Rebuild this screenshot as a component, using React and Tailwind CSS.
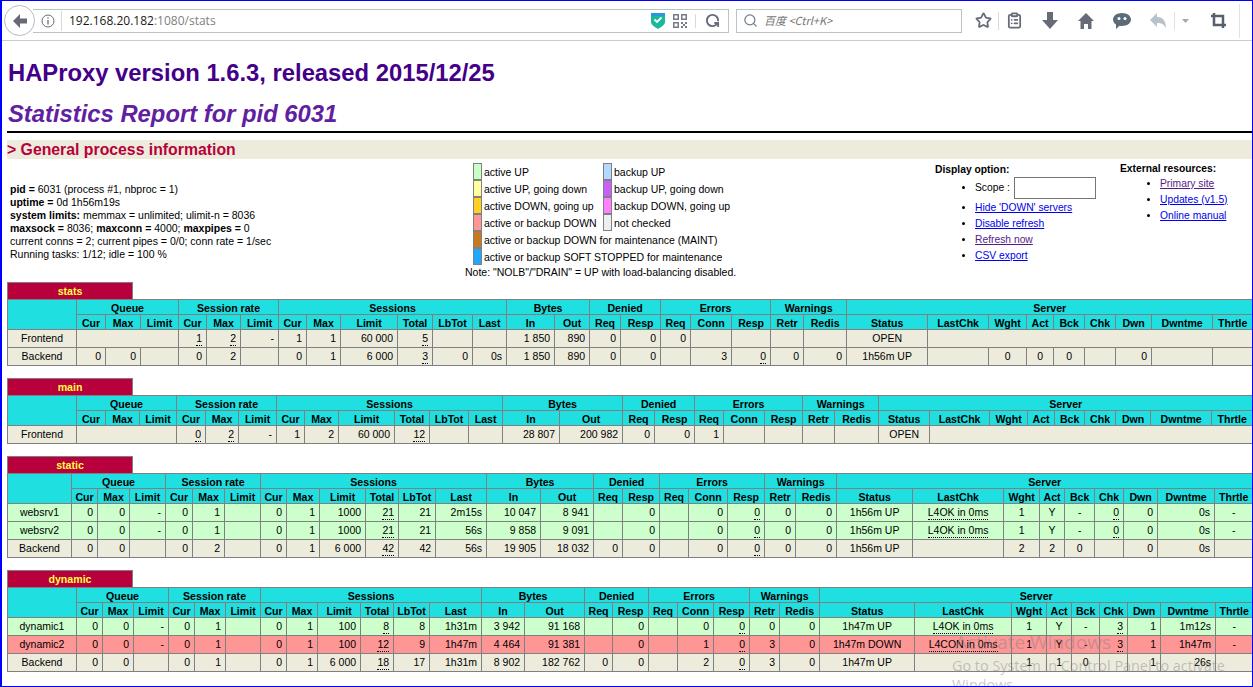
import { ClipboardList, Search, Star, RotateCw } from "lucide-react";

// column edges in page px, one list per proxy table
const EDGES = {
  stats: [7, 76, 105, 140, 178, 206, 240, 278, 306, 340, 397, 432, 472, 506, 554, 589, 620, 660, 690, 731, 770, 803, 846, 927, 988, 1026, 1053, 1084, 1115, 1151, 1212, 1252],
  main: [7, 76, 105, 139, 176, 205, 238, 276, 304, 338, 394, 429, 468, 502, 559, 622, 654, 694, 723, 764, 802, 834, 878, 929, 989, 1027, 1054, 1084, 1115, 1150, 1211, 1252],
  static: [7, 71, 97, 129, 165, 192, 224, 260, 286, 319, 365, 398, 435, 486, 540, 593, 622, 659, 688, 727, 764, 795, 836, 912, 1003, 1039, 1064, 1094, 1123, 1157, 1214, 1252],
  dynamic: [7, 76, 102, 133, 168, 194, 225, 260, 286, 317, 360, 393, 429, 481, 524, 584, 612, 648, 677, 713, 749, 779, 819, 914, 1011, 1046, 1071, 1099, 1127, 1160, 1215, 1252],
};

const GROUPS = [
  ["Queue", 3],
  ["Session rate", 3],
  ["Sessions", 6],
  ["Bytes", 2],
  ["Denied", 2],
  ["Errors", 3],
  ["Warnings", 2],
  ["Server", 9],
];

const COLS = ["Cur", "Max", "Limit", "Cur", "Max", "Limit", "Cur", "Max", "Limit", "Total", "LbTot", "Last", "In", "Out", "Req", "Resp", "Req", "Conn", "Resp", "Retr", "Redis", "Status", "LastChk", "Wght", "Act", "Bck", "Chk", "Dwn", "Dwntme", "Thrtle"];

// column index (with name = 0) of the centred cells
const CENTERED = [0, 22, 23, 24, 25, 26, 30];

const u = (text) => ({ text, underlined: true });
const span = (n) => ({ colSpan: n });

const PROXIES = [
  {
    name: "stats",
    rows: [
      { bg: "bg-[#edecdc]", cells: ["Frontend", span(3), u("1"), u("2"), "-", "1", "1", "60 000", u("5"), "", "", "1 850", "890", "0", "0", "0", "", "", "", "", "OPEN", span(8)] },
      { bg: "bg-[#edecdc]", cells: ["Backend", "0", "0", "", "0", "2", "", "0", "1", "6 000", u("3"), "0", "0s", "1 850", "890", "0", "0", "", "3", u("0"), "0", "0", "1h56m UP", "", "0", "0", "0", "", "0", "", ""] },
    ],
  },
  {
    name: "main",
    rows: [
      { bg: "bg-[#edecdc]", cells: ["Frontend", span(3), u("0"), u("2"), "-", "1", "2", "60 000", u("12"), "", "", "28 807", "200 982", "0", "0", "1", "", "", "", "", "OPEN", span(8)] },
    ],
  },
  {
    name: "static",
    rows: [
      { bg: "bg-[#ccffcc]", cells: ["websrv1", "0", "0", "-", "0", "1", "", "0", "1", "1000", u("21"), "21", "2m15s", "10 047", "8 941", "", "0", "", "0", u("0"), "0", "0", "1h56m UP", u("L4OK in 0ms"), "1", "Y", "-", u("0"), "0", "0s", "-"] },
      { bg: "bg-[#ccffcc]", cells: ["websrv2", "0", "0", "-", "0", "1", "", "0", "1", "1000", u("21"), "21", "56s", "9 858", "9 091", "", "0", "", "0", u("0"), "0", "0", "1h56m UP", u("L4OK in 0ms"), "1", "Y", "-", u("0"), "0", "0s", "-"] },
      { bg: "bg-[#edecdc]", cells: ["Backend", "0", "0", "", "0", "2", "", "0", "1", "6 000", u("42"), "42", "56s", "19 905", "18 032", "0", "0", "", "0", u("0"), "0", "0", "1h56m UP", "", "2", "2", "0", "", "0", "0s", ""] },
    ],
  },
  {
    name: "dynamic",
    rows: [
      { bg: "bg-[#ccffcc]", cells: ["dynamic1", "0", "0", "-", "0", "1", "", "0", "1", "100", u("8"), "8", "1h31m", "3 942", "91 168", "", "0", "", "0", u("0"), "0", "0", "1h47m UP", u("L4OK in 0ms"), "1", "Y", "-", u("3"), "1", "1m12s", "-"] },
      { bg: "bg-[#ff9696]", cells: ["dynamic2", "0", "0", "-", "0", "1", "", "0", "1", "100", u("12"), "9", "1h47m", "4 464", "91 381", "", "0", "", "1", u("0"), "3", "0", "1h47m DOWN", u("L4CON in 0ms"), "1", "Y", "-", u("3"), "1", "1h47m", "-"] },
      { bg: "bg-[#edecdc]", cells: ["Backend", "0", "0", "", "0", "1", "", "0", "1", "6 000", u("18"), "17", "1h31m", "8 902", "182 762", "0", "0", "", "2", u("0"), "3", "0", "1h47m UP", "", "1", "1", "0", "", "1", "26s", ""] },
    ],
  },
];

const LEGEND_LEFT = [
  ["bg-[#c8ffc8]", "active UP"],
  ["bg-[#ffffa0]", "active UP, going down"],
  ["bg-[#ffd020]", "active DOWN, going up"],
  ["bg-[#ff9696]", "active or backup DOWN"],
  ["bg-[#c87820]", "active or backup DOWN for maintenance (MAINT)"],
  ["bg-[#20a8ff]", "active or backup SOFT STOPPED for maintenance"],
];

const LEGEND_RIGHT = [
  ["bg-[#b4d8ff]", "backup UP"],
  ["bg-[#c860f8]", "backup UP, going down"],
  ["bg-[#ff80ff]", "backup DOWN, going up"],
  ["bg-[#eeeeee]", "not checked"],
];

const ProxyTable = ({ proxy }) => {
  const edges = EDGES[proxy.name];
  return (
    <section>
      <div className="flex h-[17px] w-[126px] items-center justify-center border border-b-0 border-[#808080] bg-[#b8003c] pt-[2px] text-[10.6px] font-bold text-[#ffff40]">
        {proxy.name}
      </div>
      <table className="w-[1245px] table-fixed border-collapse text-[10.5px]">
        <colgroup>
          {edges.slice(1).map((edge, i) => (
            <col key={i} style={{ width: edge - edges[i] }} />
          ))}
        </colgroup>
        <thead>
          <tr className="h-[15px]">
            <th rowSpan={2} className="border border-[#808080] bg-[#20dfe0]" />
            {GROUPS.map(([label, n]) => (
              <th key={label} colSpan={n} className="h-[15px] border border-[#808080] bg-[#20dfe0] p-0 pt-[2px] text-[10.6px] font-bold leading-none">
                {label}
              </th>
            ))}
          </tr>
          <tr className="h-[15px]">
            {COLS.map((label, i) => (
              <th key={i} className="h-[15px] overflow-hidden border border-[#808080] bg-[#20dfe0] p-0 pt-[2px] text-[10.6px] font-bold leading-none">
                {label}
              </th>
            ))}
          </tr>
        </thead>
        <tbody>
          {proxy.rows.map((row, r) => {
            let col = 0;
            return (
              <tr key={r} className="h-[18px]">
                {row.cells.map((cell, i) => {
                  const colSpan = cell.colSpan || 1;
                  const index = col;
                  col += colSpan;
                  const text = typeof cell === "string" ? cell : cell.text;
                  return (
                    <td
                      key={i}
                      colSpan={colSpan}
                      className={`h-[18px] whitespace-nowrap border border-[#808080] py-0 pl-0 leading-none ${row.bg} ${CENTERED.includes(index) ? "pr-0 text-center" : "pr-1 text-right"}`}
                    >
                      {cell.underlined ? (
                        <span className="inline-block border-b border-dotted border-black leading-[13px]">{text}</span>
                      ) : (
                        text
                      )}
                    </td>
                  );
                })}
              </tr>
            );
          })}
        </tbody>
      </table>
    </section>
  );
};

const LegendRow = ({ color, label }) => (
  <div className="flex h-[17px] items-center">
    <span className={`h-[17px] w-[9px] border border-[#808080] ${color}`} />
    <span className="ml-[2px] mt-[2px] whitespace-nowrap">{label}</span>
  </div>
);

const Toolbar = () => (
  <div className="flex h-[40px] items-center border-b border-[#c8ccce] bg-white">
    <button className="z-10 ml-[2px] flex h-[31px] w-[31px] shrink-0 items-center justify-center rounded-full border border-[#b4bcc4] bg-white">
      <svg width="18" height="18" viewBox="0 0 18 18">
        <path d="M9 2 2 9l7 7v-4.500h7v-5H9z" fill="#676b78" />
      </svg>
    </button>
    <div className="-ml-[2px] flex h-[24px] w-[696px] items-center border border-l-0 border-[#bac4c8]">
      <svg className="ml-[8px]" width="14" height="14" viewBox="0 0 14 14" fill="none" stroke="#676b78">
        <circle cx="7" cy="7" r="6" />
        <path d="M7 6v4.500M7 3.500v1.200" strokeWidth="1.300" />
      </svg>
      <span className="ml-[6px] h-[20px] w-px bg-[#d6dadd]" />
      <span className="ml-[7px] font-['Open_Sans',sans-serif] text-[12px] text-[#1a1a1a]">
        192.168.20.182<span className="text-[#808080]">:1080/stats</span>
      </span>
      <svg className="ml-auto mr-[8px]" width="14" height="17" viewBox="0 0 14 17">
        <path d="M0 1h14v9c0 3-4 5-7 7-3-2-7-4-7-7z" fill="#1bb89b" />
        <path d="M0 1h14v3H0z" fill="#2a9ad6" />
        <path d="m3.500 7.500 2.500 2.500 4.500-4.500" fill="none" stroke="#fff" strokeWidth="1.800" />
      </svg>
      <svg className="mr-[8px]" width="14" height="14" viewBox="0 0 14 14" fill="#777b85">
        <path d="M0 0h6v6H0zm1.500 1.500v3h3v-3zM8 0h6v6H8zm1.500 1.500v3h3v-3zM0 8h6v6H0zm1.500 1.500v3h3v-3zM8 8h2v2H8zm4 0h2v2h-2zm-2 2h2v2h-2zm-2 2h2v2H8zm4 0h2v2h-2z" />
      </svg>
      <span className="mr-[9px] h-[14px] w-px bg-[#d6dadd]" />
      <RotateCw size={15} strokeWidth={3} className="mr-[8px] -scale-x-100 rotate-180 text-[#676b78]" />
    </div>
    <div className="ml-[7px] flex h-[24px] w-[226px] items-center border border-[#bac4c8]">
      <Search size={15} className="ml-[6px] text-[#777b85]" />
      <span className="ml-[6px] font-['Noto_Sans_CJK_SC','Open_Sans',sans-serif] text-[11px] italic text-[#777]">百度 &lt;Ctrl+K&gt;</span>
    </div>
    <Star size={17} strokeWidth={2.500} className="ml-[13px] text-[#676b78]" />
    <span className="ml-[6px] h-[18px] w-px bg-[#d6dadd]" />
    <ClipboardList size={17} strokeWidth={2.500} className="ml-[7px] text-[#676b78]" />
    <svg className="ml-[19px]" width="16" height="17" viewBox="0 0 16 17" fill="#676b78">
      <path d="M5 0h6v8h5l-8 9-8-9h5z" />
    </svg>
    <svg className="ml-[20px]" width="16" height="16" viewBox="0 0 16 16" fill="#676b78">
      <path d="M8 0 0 8h2.500v8h3.500v-5h4v5h3.500V8H16z" />
    </svg>
    <svg className="ml-[19px]" width="18" height="16" viewBox="0 0 18 16">
      <path d="M9 0c5 0 9 2.800 9 6.500S14 13 9 13c-1 0-1.500 0-2.500-.2L3 16v-4.500C1 10.300 0 8.500 0 6.500 0 2.800 4 0 9 0z" fill="#5b6b78" />
      <circle cx="6" cy="5.500" r="1.500" fill="#fff" />
      <circle cx="12" cy="5.500" r="1.500" fill="#fff" />
    </svg>
    <svg className="ml-[19px]" width="16" height="15" viewBox="0 0 16 15" fill="#b8c2c9">
      <path d="M7 0v4c5 0 9 3 9 11-2-4-5-5-9-5v4L0 7z" />
    </svg>
    <span className="ml-[8px] h-[18px] w-px bg-[#e0e3e6]" />
    <svg className="ml-[7px]" width="7" height="4" viewBox="0 0 7 4" fill="#a4a8b0">
      <path d="M0 0h7L3.500 4z" />
    </svg>
    <svg className="ml-[22px]" width="15" height="15" viewBox="0 0 15 15" fill="none" stroke="#55606c" strokeWidth="2.500">
      <path d="M3 0v12h12M0 3h12v12" />
    </svg>
    <span className="ml-[13px] h-[34px] w-px bg-[#e0e3e6]" />
  </div>
);

const App = () => {
  return (
    <div className="relative h-[687px] w-[1253px] overflow-hidden border-b border-l-2 border-r border-t border-[#0000ff] bg-white font-['Liberation_Sans',Arial,sans-serif] text-black">
      <Toolbar />

      <h1 className="ml-[6px] mt-[18px] text-[23.8px] font-bold leading-[28px] text-[#440088]">
        HAProxy version 1.6.3, released 2015/12/25
      </h1>
      <h2 className="ml-[6px] mt-[13px] text-[23.8px] font-bold italic leading-[28px] text-[#6020a0]">
        Statistics Report for pid 6031
      </h2>
      <div className="ml-[5px] mt-[3px] h-[2px] bg-black" />
      <h3 className="ml-[5px] mt-[7px] flex h-[19px] items-center bg-[#edecdc] text-[15.800px] font-bold text-[#b8003c]">
        &gt; General process information
      </h3>

      <div className="flex h-[123px] text-[10.5px]">
        <div className="ml-[8px] w-[455px] pt-[24px] leading-[13px]">
          <p><b>pid = </b>6031 (process #1, nbproc = 1)</p>
          <p><b>uptime = </b>0d 1h56m19s</p>
          <p><b>system limits:</b> memmax = unlimited; ulimit-n = 8036</p>
          <p><b>maxsock = </b>8036; <b>maxconn = </b>4000; <b>maxpipes = </b>0</p>
          <p>current conns = 2; current pipes = 0/0; conn rate = 1/sec</p>
          <p>Running tasks: 1/12; idle = 100 %</p>
        </div>

        <div className="w-[470px] pt-[4px]">
          <div className="relative ml-[8px]">
            {LEGEND_LEFT.map(([color, label]) => (
              <LegendRow key={label} color={color} label={label} />
            ))}
            <div className="absolute left-[130px] top-0">
              {LEGEND_RIGHT.map(([color, label]) => (
                <LegendRow key={label} color={color} label={label} />
              ))}
            </div>
          </div>
          <p className="leading-[14px]">Note: "NOLB"/"DRAIN" = UP with load-balancing disabled.</p>
        </div>

        <div className="w-[185px] pt-[4px] text-[10.3px]">
          <b className="block leading-[13px]">Display option:</b>
          <ul className="ml-[40px] mt-[1px] list-disc">
            <li className="h-[22px] leading-[22px]">
              Scope : <input className="ml-px h-[22px] w-[82px] border border-[#767676] align-middle" />
            </li>
            <li className="h-[16px] leading-[18px]"><a className="text-[#0000ee] underline">Hide 'DOWN' servers</a></li>
            <li className="h-[16px] leading-[18px]"><a className="text-[#0000ee] underline">Disable refresh</a></li>
            <li className="h-[16px] leading-[18px]"><a className="text-[#551a8b] underline">Refresh now</a></li>
            <li className="h-[16px] leading-[18px]"><a className="text-[#0000ee] underline">CSV export</a></li>
          </ul>
        </div>

        <div className="pt-[4px] text-[10.3px]">
          <b className="block leading-[12px]">External resources:</b>
          <ul className="ml-[40px] list-disc">
            <li className="h-[16px] leading-[18px]"><a className="text-[#551a8b] underline">Primary site</a></li>
            <li className="h-[16px] leading-[18px]"><a className="text-[#0000ee] underline">Updates (v1.5)</a></li>
            <li className="h-[16px] leading-[18px]"><a className="text-[#0000ee] underline">Online manual</a></li>
          </ul>
        </div>
      </div>

      <div className="ml-[5px] flex flex-col gap-[12px]">
        {PROXIES.map((proxy) => (
          <ProxyTable key={proxy.name} proxy={proxy} />
        ))}
      </div>

      {/* windows activation watermark */}
      <div className="pointer-events-none absolute left-[950px] top-[628px] w-[290px] font-['Open_Sans',sans-serif] text-[#80808070]">
        <p className="ml-[3px] text-[19px] leading-[27px]">Activate Windows</p>
        <p className="text-[14.400px] leading-[19px]">Go to System in Control Panel to activate Windows</p>
      </div>
    </div>
  );
};

export default App;
